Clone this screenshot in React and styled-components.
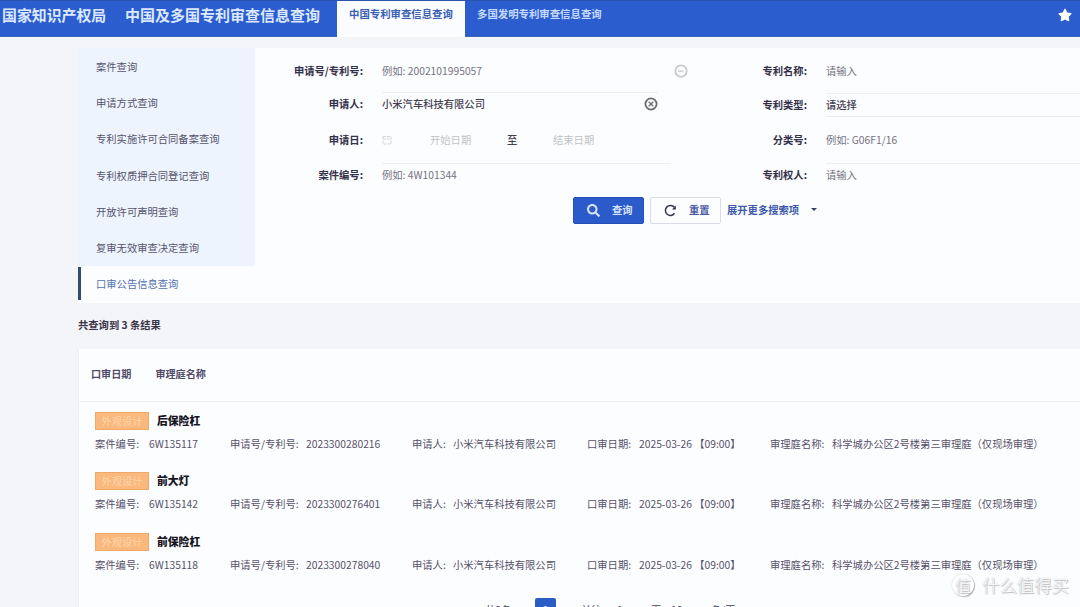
import React from 'react';
import styled, { createGlobalStyle } from 'styled-components';
import { FaStar, FaSearch } from 'react-icons/fa';

const menu = [
  '案件查询',
  '申请方式查询',
  '专利实施许可合同备案查询',
  '专利权质押合同登记查询',
  '开放许可声明查询',
  '复审无效审查决定查询',
  '口审公告信息查询',
];

const results = [
  { title: '后保险杠', caseNo: '6W135117', appNo: '2023300280216' },
  { title: '前大灯', caseNo: '6W135142', appNo: '2023300276401' },
  { title: '前保险杠', caseNo: '6W135118', appNo: '2023300278040' },
];

const App = () => {
  return (
    <>
      <GlobalStyle />
      <Page>
        <Header>
          <Brand>国家知识产权局</Brand>
          <SystemName>中国及多国专利审查信息查询</SystemName>
          <Tab $active>中国专利审查信息查询</Tab>
          <Tab>多国发明专利审查信息查询</Tab>
          <Star>
            <FaStar />
          </Star>
        </Header>

        <SearchPanel>
          <Sidebar>
            {menu.map((item, i) => (
              <MenuItem key={item} $active={i === menu.length - 1}>
                {item}
              </MenuItem>
            ))}
          </Sidebar>
          <Form>
            <Fields>
              <Column $wide>
                <Field $height={40}>
                  <Label>申请号/专利号:</Label>
                  <Input $end={21}>
                    <Placeholder>例如: 2002101995057</Placeholder>
                    <HelpIcon />
                  </Input>
                </Field>
                <Field $height={26}>
                  <Label>申请人:</Label>
                  <Input $line $end={51}>
                    <Value>小米汽车科技有限公司</Value>
                    <ClearIcon />
                  </Input>
                </Field>
                <Field $height={46}>
                  <Label>申请日:</Label>
                  <DateRange>
                    <DateIcon />
                    <DateText>开始日期</DateText>
                    <Value>至</Value>
                    <DateText>结束日期</DateText>
                  </DateRange>
                </Field>
                <Field $height={23}>
                  <Label>案件编号:</Label>
                  <Input $line $end={38}>
                    <Placeholder>例如: 4W101344</Placeholder>
                  </Input>
                </Field>
              </Column>
              <Column>
                <Field $height={40}>
                  <Label>专利名称:</Label>
                  <Input>
                    <Placeholder>请输入</Placeholder>
                  </Input>
                </Field>
                <Field $height={28}>
                  <Label>专利类型:</Label>
                  <Input $line $bottom>
                    <Value>请选择</Value>
                  </Input>
                </Field>
                <Field $height={42}>
                  <Label>分类号:</Label>
                  <Input>
                    <Placeholder>例如: G06F1/16</Placeholder>
                  </Input>
                </Field>
                <Field $height={27}>
                  <Label>专利权人:</Label>
                  <Input $line>
                    <Placeholder>请输入</Placeholder>
                  </Input>
                </Field>
              </Column>
            </Fields>
            <Actions>
              <Button $primary>
                <FaSearch />
                <span>查询</span>
              </Button>
              <Button>
                <ResetIcon />
                <span>重置</span>
              </Button>
              <More>
                展开更多搜索项
                <Caret />
              </More>
            </Actions>
          </Form>
        </SearchPanel>

        <Count>共查询到 3 条结果</Count>

        <ResultPanel>
          <SortBar>
            <span>口审日期</span>
            <span>审理庭名称</span>
          </SortBar>
          <List>
            {results.map((r) => (
              <Result key={r.caseNo}>
                <ResultHead>
                  <Badge>外观设计</Badge>
                  <h3>{r.title}</h3>
                </ResultHead>
                <Details>
                  <span>案件编号:</span>
                  <span>{r.caseNo}</span>
                  <span>申请号/专利号:</span>
                  <span>{r.appNo}</span>
                  <span>申请人:</span>
                  <span>小米汽车科技有限公司</span>
                  <span>口审日期:</span>
                  <span>2025-03-26 【09:00】</span>
                  <span>审理庭名称:</span>
                  <span>科学城办公区2号楼第三审理庭（仅现场审理）</span>
                </Details>
              </Result>
            ))}
          </List>
          <Pagination>
            <span>共3条</span>
            <span>‹</span>
            <PageNumber>1</PageNumber>
            <span>›</span>
            <span>前往</span>
            <span>1</span>
            <span>页</span>
            <span>10</span>
            <span>条/页</span>
          </Pagination>
        </ResultPanel>
      </Page>
      <Watermark>
        <Seal>值</Seal>
        什么值得买
      </Watermark>
    </>
  );
};

const HelpIcon = () => (
  <svg width='14' height='14' viewBox='0 0 14 14' fill='none' stroke='#c9c9ce'>
    <circle cx='7' cy='7' r='5.7' strokeWidth='1.8' />
    <path d='M4 7.2h5.5M4.5 4.5v1' strokeWidth='1.3' />
  </svg>
);

const ClearIcon = () => (
  <svg width='14' height='14' viewBox='0 0 14 14' fill='none' stroke='#6a6a70'>
    <circle cx='7' cy='7' r='5.6' strokeWidth='1.8' />
    <path d='M4.7 4.7l4.6 4.6M9.3 4.7L4.7 9.3' strokeWidth='1.3' />
  </svg>
);

const DateIcon = () => (
  <svg width='10' height='10' viewBox='0 0 10 10' fill='none' stroke='#d3d3d8'>
    <path d='M1 1.5h8v7.5H1zM1 4h8' strokeDasharray='3 1' />
  </svg>
);

const ResetIcon = () => (
  <svg width='13' height='13' viewBox='0 0 13 13' fill='none' stroke='#34344a'>
    <path d='M10.5 9.3A5 5 0 1 1 10.3 3.3' strokeWidth='1.5' />
    <path d='M11.8 1.5v4H8z' fill='#34344a' stroke='none' />
  </svg>
);

const GlobalStyle = createGlobalStyle`
  * {
    box-sizing: border-box;
  }
  body {
    margin: 0;
    background: #f4f5f8;
    font-family: 'Noto Sans CJK SC', sans-serif;
    font-size: 10.3px;
    line-height: 14px;
    color: #4b465f;
    white-space: nowrap;
    overflow: hidden;
  }
`;

const Page = styled.div`
  height: 607px;
  overflow: hidden;
  display: flex;
  flex-direction: column;
`;

const Header = styled.header`
  display: flex;
  flex: none;
  height: 37px;
  background: #2b5dcf;
  border-top: 1px solid #2853ae;
  border-bottom: 1px solid #3e65bb;
  color: #dce8ff;
`;

const Brand = styled.div`
  width: 125px;
  padding: 3px 0 0 2px;
  font-size: 14.9px;
  line-height: 22px;
  font-weight: 700;
`;

const SystemName = styled(Brand)`
  width: 212px;
  padding-left: 0;
  font-size: 15px;
`;

const Tab = styled.div`
  height: 36px;
  width: ${(p) => (p.$active ? '128px' : '150px')};
  padding: 6px 12px;
  font-size: 10.4px;
  font-weight: 700;
  background: ${(p) => (p.$active ? '#fbfcff' : 'transparent')};
  color: ${(p) => (p.$active ? '#3b5fb4' : '#c6d9ff')};
`;

const Star = styled.div`
  margin-left: auto;
  padding: 7px 8px 0 0;
  color: #fff;
  svg {
    display: block;
    width: 14px;
    height: 14px;
  }
`;

const SearchPanel = styled.section`
  display: flex;
  flex: none;
  height: 255px;
  margin: 11px 0 0 78px;
  background: #fbfdff;
`;

const Sidebar = styled.nav`
  width: 177px;
  padding-top: 1px;
  background: linear-gradient(#edf4fe 30px, transparent 30px);
`;

const MenuItem = styled.div`
  display: flex;
  align-items: center;
  height: ${(p) => (p.$active ? '33px' : '36.2px')};
  margin-top: ${(p) => (p.$active ? '1px' : '0')};
  padding-left: ${(p) => (p.$active ? '15px' : '18px')};
  background: ${(p) => (p.$active ? '#fbfdff' : '#edf4fe')};
  border-left: ${(p) => (p.$active ? '3px solid #334a70' : 'none')};
  color: ${(p) => (p.$active ? '#5270b0' : '#57536c')};
`;

const Form = styled.div`
  flex: 1;
`;

const Fields = styled.div`
  display: flex;
  padding-top: 3px;
`;

const Field = styled.div`
  display: grid;
  align-items: center;
  column-gap: 19px;
  height: ${(p) => p.$height}px;
`;

const Column = styled.div`
  width: ${(p) => (p.$wide ? '454px' : '371px')};
  ${Field} {
    grid-template-columns: ${(p) => (p.$wide ? '108px' : '98px')} 1fr;
  }
`;

const Label = styled.label`
  text-align: right;
  font-weight: 700;
  color: #34304a;
`;

const Input = styled.div`
  display: flex;
  align-items: center;
  justify-content: space-between;
  height: 24px;
  margin-right: ${(p) => p.$end || 0}px;
  border: 0 solid transparent;
  border-width: 1px 0;
  border-top-color: ${(p) => (p.$line ? '#eeeff4' : 'transparent')};
  border-bottom-color: ${(p) => (p.$bottom ? '#eaebf0' : 'transparent')};
`;

const Placeholder = styled.span`
  color: #77727f;
`;

const Value = styled.span`
  font-weight: 500;
  color: #45404f;
`;

const DateRange = styled.div`
  display: grid;
  grid-template-columns: 48px 77px 46px 1fr;
  align-items: center;
`;

const DateText = styled.span`
  color: #c2c2c6;
`;

const Actions = styled.div`
  display: flex;
  align-items: center;
  padding: 9px 0 0 318px;
`;

const Button = styled.div`
  display: flex;
  align-items: center;
  gap: 12px;
  width: 71px;
  height: 27px;
  margin-right: 6px;
  padding-left: 13px;
  border: 1px solid ${(p) => (p.$primary ? '#2650b8' : '#d9dce6')};
  border-radius: 2px;
  background: ${(p) => (p.$primary ? '#2b5acb' : '#fcfdff')};
  color: ${(p) => (p.$primary ? '#d5e3ff' : '#4d5ba5')};
  font-weight: 700;
  svg {
    flex: none;
    width: 13px;
    height: 13px;
  }
  span {
    padding-bottom: 2px;
  }
`;

const More = styled.div`
  display: flex;
  align-items: center;
  gap: 12px;
  padding-bottom: 2px;
  color: #3d57ac;
  font-weight: 700;
`;

const Caret = styled.i`
  border: 3px solid transparent;
  border-top-color: #35405d;
  border-bottom: 0;
`;

const Count = styled.div`
  flex: none;
  height: 46px;
  padding: 15px 0 0 78px;
  font-weight: 700;
  color: #3a3548;
`;

const ResultPanel = styled.section`
  flex: none;
  height: 280px;
  margin-left: 78px;
  background: #fcfdff;
  border-left: 1px solid #eeeff4;
`;

const SortBar = styled.div`
  display: flex;
  gap: 24px;
  height: 53px;
  padding: 18px 0 0 12px;
  font-size: 10.1px;
  font-weight: 700;
  color: #504b6a;
  border-bottom: 1px solid #f0f1f5;
`;

const List = styled.div`
  padding: 10px 0 0 16px;
`;

const Result = styled.article`
  height: 60.3px;
`;

const ResultHead = styled.div`
  display: flex;
  align-items: center;
  gap: 8px;
  height: 18px;
  h3 {
    margin: 0;
    padding-bottom: 2px;
    font-size: 10.8px;
    font-weight: 900;
    color: #17151f;
  }
`;

const Badge = styled.span`
  width: 54px;
  height: 18px;
  border: 1px solid #eda86c;
  background: #fbb87c;
  color: #ffd6ae;
  text-align: center;
  line-height: 15px;
`;

const Details = styled.div`
  display: grid;
  grid-template-columns: 54px 81px 76px 106px 41px 134px 52px 131px 62px 1fr;
  padding-top: 7px;
  color: #57516a;
`;

const Pagination = styled.div`
  display: grid;
  grid-template-columns: 40px 10px 29px 17px 36px 34px 20px 40px 1fr;
  align-items: start;
  padding: 5px 0 0 406px;
  line-height: 24px;
`;

const PageNumber = styled.b`
  width: 21px;
  height: 21px;
  border-radius: 2px;
  background: #2b5dc6;
  color: #dce8ff;
  text-align: center;
`;

const Watermark = styled.div`
  position: absolute;
  left: 952px;
  top: 573px;
  display: flex;
  align-items: center;
  gap: 8px;
  height: 24px;
  font-size: 17.4px;
  font-weight: 300;
  color: #fff;
  text-shadow: 0 0 1px #a3a3a9, 1px 1px 1px #b5b5ba;
`;

const Seal = styled.span`
  width: 22px;
  height: 22px;
  border: 1px solid #fff;
  border-radius: 50%;
  box-shadow: 0 0 1px #a3a3a9, 1px 1px 1px #b5b5ba;
  text-align: center;
  line-height: 20px;
  font-size: 16px;
`;

export default App;
